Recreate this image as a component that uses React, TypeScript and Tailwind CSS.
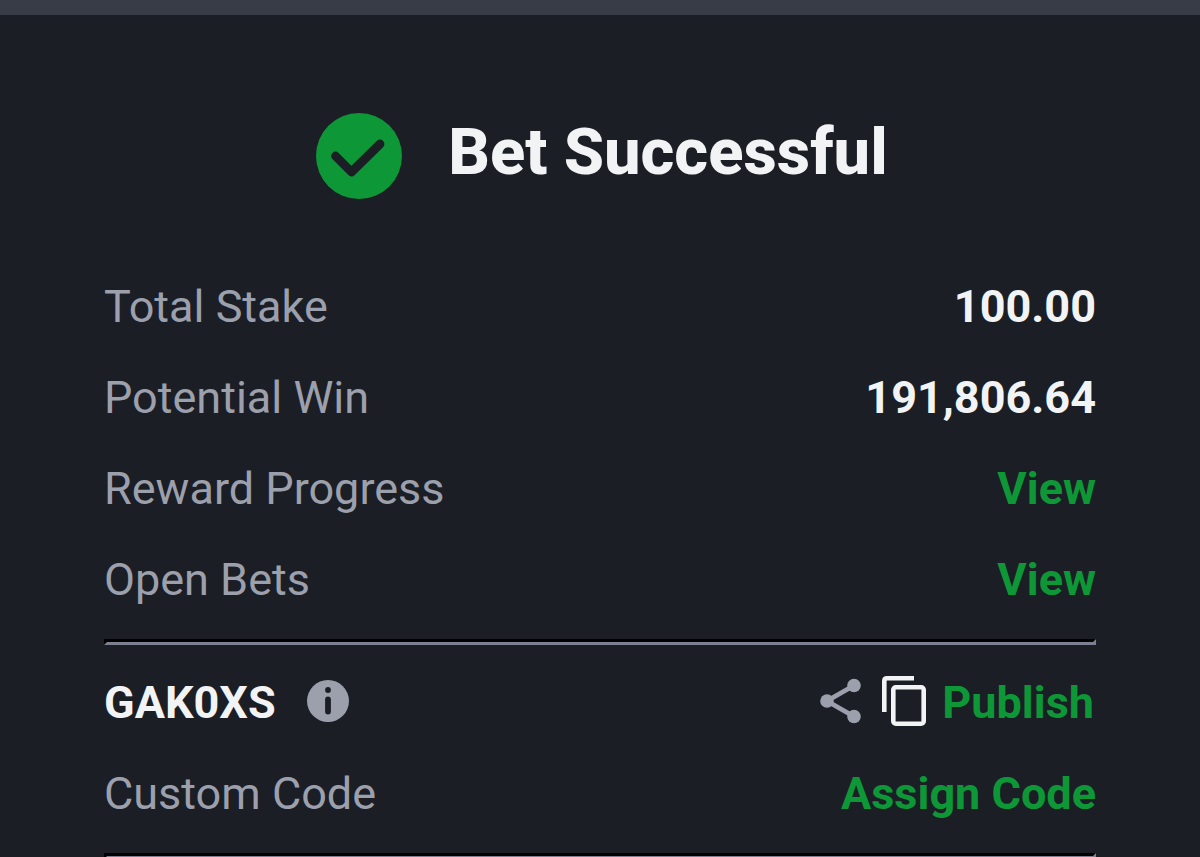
import React from 'react';

const CheckBadge: React.FC = () => (
  <svg viewBox="0 0 86 86" className="size-[86px] shrink-0" aria-hidden="true">
    <circle cx="43" cy="43" r="43" fill="#0d9737" />
    <path
      d="M19.5 43 L35.5 59 L64 31"
      fill="none"
      stroke="#1b1e25"
      strokeWidth="8.8"
      strokeLinecap="round"
      strokeLinejoin="round"
    />
  </svg>
);

const InfoIcon: React.FC = () => (
  <svg viewBox="0 0 42 42" className="size-[42px]" aria-hidden="true">
    <circle cx="21" cy="21" r="21" fill="#9ca0ad" />
    <circle cx="21" cy="10" r="2.9" fill="#1b1e25" />
    <path d="M21 19.5 V31.5" stroke="#1b1e25" strokeWidth="5.8" strokeLinecap="round" />
  </svg>
);

const ShareIcon: React.FC = () => (
  <svg viewBox="0 0 42 46" className="h-[46px] w-[42px]" aria-hidden="true">
    <path d="M34 7.5 L7 23 L34 38.5" fill="none" stroke="#9ca0ad" strokeWidth="4.8" />
    <circle cx="34" cy="7.5" r="6.8" fill="#9ca0ad" />
    <circle cx="7" cy="23" r="6.8" fill="#9ca0ad" />
    <circle cx="34" cy="38.5" r="6.8" fill="#9ca0ad" />
  </svg>
);

const CopyIcon: React.FC = () => (
  <svg viewBox="0 0 44 50" className="h-[50px] w-[44px]" fill="none" stroke="#f2f3f5" aria-hidden="true">
    <path d="M32 2.3 H5 Q2.3 2.3 2.3 5 V36" strokeWidth="4.6" />
    <rect x="11.3" y="11.3" width="30.4" height="36.4" rx="2.5" strokeWidth="4.6" />
  </svg>
);

const Divider: React.FC = () => (
  <hr className="h-0 border-[3px] border-t-black border-r-[#7d8091] border-b-[#7d8091] border-l-black" />
);

interface RowProps {
  label: string;
  children: React.ReactNode;
}

const Row: React.FC<RowProps> = ({ label, children }) => (
  <div className="flex h-[91px] items-center justify-between">
    <span className="text-[#9ca0ad]">{label}</span>
    {children}
  </div>
);

const App: React.FC = () => {
  const amounts = [
    { label: 'Total Stake', value: '100.00' },
    { label: 'Potential Win', value: '191,806.64' },
  ];

  const links = ['Reward Progress', 'Open Bets'];

  return (
    <main className="h-screen overflow-hidden border-t-[15px] border-[#383c46] bg-[#1b1e25] px-[104px] pt-[98px] font-['Roboto',sans-serif] text-[45px] leading-[52px]">
      {/* Header */}
      <header className="flex justify-center gap-[46px] pl-1">
        <CheckBadge />
        <h1 className="text-[65px] leading-[78px] font-extrabold text-[#f2f3f5]">Bet Successful</h1>
      </header>

      {/* Bet details */}
      <section className="pt-[62px] pb-[14px]">
        {amounts.map(({ label, value }) => (
          <Row key={label} label={label}>
            <span className="font-bold text-[#f2f3f5]">{value}</span>
          </Row>
        ))}
        {links.map((label) => (
          <Row key={label} label={label}>
            <a href="#" aria-label={`View ${label}`} className="font-bold text-[#0d9737]">View</a>
          </Row>
        ))}
      </section>

      <Divider />

      {/* Booking code */}
      <section className="pt-3 pb-[14px]">
        <div className="flex h-[91px] items-center justify-between">
          <div className="flex items-center gap-[31px]">
            <span className="font-bold text-[#f2f3f5]">GAK0XS</span>
            <button type="button" aria-label="About this code" className="pb-1">
              <InfoIcon />
            </button>
          </div>
          <div className="flex items-center pr-0.5">
            <button type="button" aria-label="Share code" className="mr-5 pb-1">
              <ShareIcon />
            </button>
            <button type="button" aria-label="Copy code" className="mr-4 pb-1">
              <CopyIcon />
            </button>
            <button type="button" className="font-bold text-[#0d9737]">Publish</button>
          </div>
        </div>
        <Row label="Custom Code">
          <button type="button" className="font-bold text-[#0d9737]">Assign Code</button>
        </Row>
      </section>

      <Divider />
    </main>
  );
};

export default App;
